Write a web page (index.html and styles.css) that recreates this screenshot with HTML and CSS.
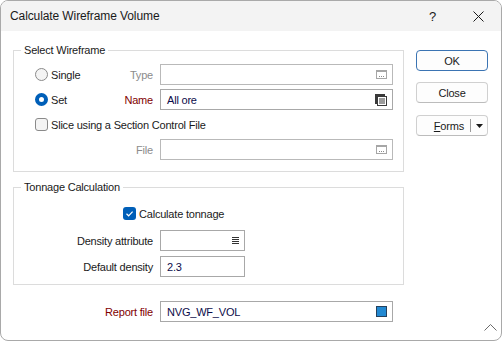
FILE: index.html
```html
<!DOCTYPE html>
<html lang="en">
<head>
  <meta charset="UTF-8">
  <title>Calculate Wireframe Volume</title>
  <link rel="stylesheet" href="styles.css">
</head>
<body>
  <div class="window">
    <div class="titlebar">
      <span class="title">Calculate Wireframe Volume</span>
      <span class="help">?</span>
      <span class="close">
        <svg width="11" height="11" viewBox="0 0 11 11"><path d="M0.5 0.5 L10.5 10.5 M10.5 0.5 L0.5 10.5" stroke="#1a1a1a" stroke-width="1" fill="none"/></svg>
      </span>
    </div>
    <div class="content">
      <div class="main">
        <fieldset class="group group-wire">
          <legend>Select Wireframe</legend>
          <div class="row">
            <div class="lead">
              <span class="radio"></span><span class="opt">Single</span>
              <span class="lbl muted">Type</span>
            </div>
            <div class="input disabled">
              <span class="val"></span>
              <svg class="ico" width="11" height="9" viewBox="0 0 11 9"><rect x="0.5" y="0.5" width="10" height="8" fill="#fff" stroke="#a6a6a6"/><rect x="1" y="1" width="9" height="1" fill="#a6a6a6"/><rect x="3" y="6" width="1" height="1" fill="#8a8a8a"/><rect x="5" y="6" width="1" height="1" fill="#8a8a8a"/><rect x="7" y="6" width="1" height="1" fill="#8a8a8a"/></svg>
            </div>
          </div>
          <div class="row gap">
            <div class="lead">
              <span class="radio on"></span><span class="opt">Set</span>
              <span class="lbl req">Name</span>
            </div>
            <div class="input">
              <span class="val">All ore</span>
              <svg class="ico" width="12" height="12" viewBox="0 0 12 12"><rect x="0" y="0" width="10" height="10" fill="#3a3a3a"/><rect x="2.5" y="2.5" width="9" height="9" fill="#fff" stroke="#3a3a3a"/><rect x="4" y="4.5" width="6" height="1" fill="#3a3a3a"/><rect x="4" y="6.5" width="6" height="1" fill="#3a3a3a"/><rect x="4" y="8.5" width="6" height="1" fill="#3a3a3a"/></svg>
            </div>
          </div>
          <div class="row gap">
            <span class="check"></span><span class="opt">Slice using a Section Control File</span>
          </div>
          <div class="row gap">
            <div class="lead">
              <span class="lbl muted">File</span>
            </div>
            <div class="input disabled">
              <span class="val"></span>
              <svg class="ico" width="11" height="9" viewBox="0 0 11 9"><rect x="0.5" y="0.5" width="10" height="8" fill="#fff" stroke="#a6a6a6"/><rect x="1" y="1" width="9" height="1" fill="#a6a6a6"/><rect x="3" y="6" width="1" height="1" fill="#8a8a8a"/><rect x="5" y="6" width="1" height="1" fill="#8a8a8a"/><rect x="7" y="6" width="1" height="1" fill="#8a8a8a"/></svg>
            </div>
          </div>
        </fieldset>

        <fieldset class="group group-tonnage">
          <legend>Tonnage Calculation</legend>
          <div class="row tonnage-check">
            <span class="check on">
              <svg width="13" height="13" viewBox="0 0 13 13"><path d="M3.5 6.8 L5.6 8.8 L9.6 4.6" stroke="#fff" stroke-width="1.2" fill="none"/></svg>
            </span><span class="opt">Calculate tonnage</span>
          </div>
          <div class="row tonnage-density">
            <div class="lead">
              <span class="lbl">Density attribute</span>
            </div>
            <div class="input short">
              <span class="val"></span>
              <svg class="ico" width="7" height="7" viewBox="0 0 7 7"><rect x="0" y="0" width="7" height="1" fill="#333"/><rect x="0" y="2" width="7" height="1" fill="#333"/><rect x="0" y="4" width="7" height="1" fill="#333"/><rect x="0" y="6" width="7" height="1" fill="#333"/></svg>
            </div>
          </div>
          <div class="row tonnage-default">
            <div class="lead">
              <span class="lbl">Default density</span>
            </div>
            <div class="input short">
              <span class="val">2.3</span>
            </div>
          </div>
        </fieldset>

        <div class="row report">
          <div class="lead">
            <span class="lbl req">Report file</span>
          </div>
          <div class="input">
            <span class="val">NVG_WF_VOL</span>
            <svg class="ico" width="11" height="11" viewBox="0 0 11 11"><rect x="0.5" y="0.5" width="10" height="10" fill="#2289d2" stroke="#24415e"/></svg>
          </div>
        </div>
      </div>

      <div class="buttons">
        <button class="btn default">OK</button>
        <button class="btn">Close</button>
        <div class="btn split">
          <span class="split-text"><u>F</u>orms</span>
          <span class="split-sep"></span>
          <span class="split-arrow">
            <svg width="7" height="4" viewBox="0 0 7 4"><path d="M0 0 L7 0 L3.5 4 Z" fill="#1a1a1a"/></svg>
          </span>
        </div>
      </div>
    </div>
    <svg class="grip" width="13" height="8" viewBox="0 0 13 8"><path d="M0.5 7.5 L6.5 1.5 L12.5 7.5" stroke="#6a6a6a" stroke-width="1" fill="none"/></svg>
  </div>
</body>
</html>
```

FILE: styles.css
```css
html, body {
  margin: 0;
  padding: 0;
  background: #ffffff;
}
body {
  font-family: "Liberation Sans", Arial, sans-serif;
  font-size: 11px;
  letter-spacing: -0.2px;
  color: #1a1a1a;
}
.window {
  position: relative;
  box-sizing: border-box;
  width: 502px;
  height: 341px;
  border: 1px solid #a9a9a9;
  border-radius: 8px;
  background: #ffffff;
  overflow: hidden;
}
.titlebar {
  display: flex;
  align-items: center;
  height: 30px;
  background: #f3f3f3;
  padding-left: 9px;
}
.title {
  flex: 1;
  font-size: 12px;
  letter-spacing: -0.1px;
  color: #1a1a1a;
}
.help {
  width: 14px;
  font-size: 13px;
  margin-right: 30px;
}
.close {
  display: flex;
  width: 11px;
  margin-right: 17px;
}
.content {
  display: flex;
  padding: 12px 13px 0 12px;
}
.main {
  width: 391px;
}
.group {
  margin: 0;
  border: 1px solid #dcdcdc;
  padding: 6px 10px 11px 21px;
}
.group legend {
  margin-left: -14px;
  padding: 0 3px;
  line-height: 15px;
}
.group-tonnage {
  margin-top: 8px;
  padding-top: 8px;
  padding-bottom: 7px;
}
.row {
  display: flex;
  align-items: center;
  height: 21px;
}
.row.gap {
  margin-top: 4px;
}
.lead {
  display: flex;
  align-items: center;
  width: 118px;
  margin-right: 7px;
}
.lbl {
  margin-left: auto;
  white-space: nowrap;
}
.muted {
  color: #8c8c8c;
}
.req {
  color: #7f0000;
}
.opt {
  margin-left: 3px;
  white-space: nowrap;
}
.radio {
  box-sizing: border-box;
  width: 13px;
  height: 13px;
  border-radius: 50%;
  border: 1px solid #8a8a8a;
  background: #f4f4f4;
}
.radio.on {
  border: 4px solid #005fb8;
  background: #ffffff;
}
.check {
  box-sizing: border-box;
  display: flex;
  width: 13px;
  height: 13px;
  border-radius: 3px;
  border: 1px solid #8a8a8a;
  background: #f4f4f4;
}
.check.on {
  border: none;
  background: #005fb8;
}
.input {
  box-sizing: border-box;
  display: flex;
  align-items: center;
  width: 233px;
  height: 21px;
  border: 1px solid #a8a8a8;
  background: #ffffff;
  padding: 0 5px 0 6px;
}
.input.disabled {
  border-color: #b9b9b9;
}
.input.short {
  width: 85px;
}
.val {
  flex: 1;
  color: #0c0c4a;
  white-space: nowrap;
}
.ico {
  display: block;
}
.tonnage-check {
  padding-left: 88px;
}
.tonnage-density {
  margin-top: 6px;
}
.tonnage-default {
  margin-top: 5px;
}
.report {
  margin-top: 16px;
  padding-left: 22px;
}
.buttons {
  display: flex;
  flex-direction: column;
  width: 72px;
  margin-left: 12px;
  padding-top: 7px;
}
.btn {
  box-sizing: border-box;
  height: 21px;
  margin-bottom: 11px;
  border: 1px solid #d0d0d0;
  border-bottom-color: #bcbcbc;
  border-radius: 4px;
  background: #fdfdfd;
  font-family: inherit;
  font-size: 11px;
  letter-spacing: -0.2px;
  color: #1a1a1a;
  padding: 0;
}
.btn.default {
  border: 1px solid #3b74b3;
}
.split {
  display: flex;
  align-items: center;
  margin-top: 1px;
}
.split-text {
  flex: 1;
  text-align: right;
  padding-right: 6px;
}
.split-sep {
  width: 1px;
  height: 13px;
  background: #9a9a9a;
}
.split-arrow {
  display: flex;
  width: 16px;
  justify-content: center;
}
.grip {
  position: absolute;
  right: 4px;
  bottom: 9px;
}
```
